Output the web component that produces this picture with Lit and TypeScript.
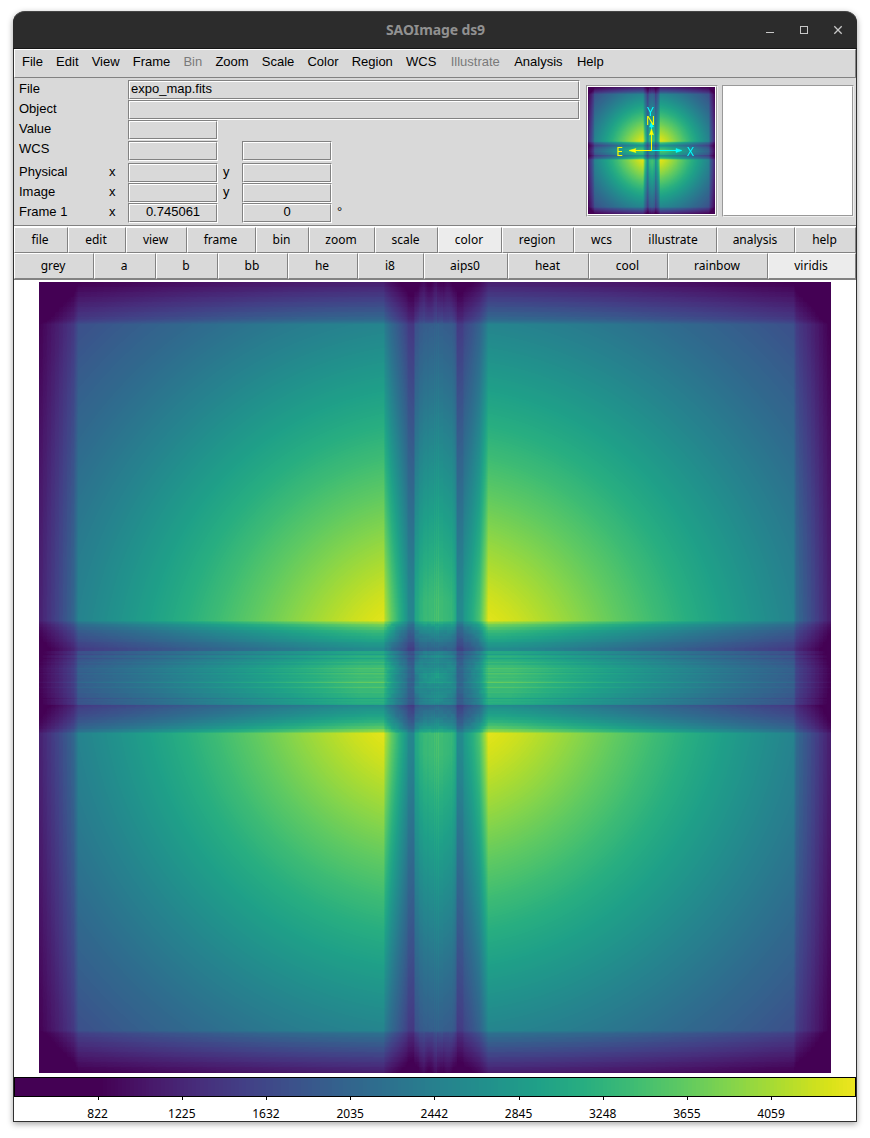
import { LitElement, html, css } from "lit";
import { customElement } from "lit/decorators.js";

type Stop = [number, number];

const VIRIDIS = [
  [68, 1, 84], [72, 24, 106], [71, 45, 123], [66, 64, 134], [59, 82, 139], [51, 99, 141],
  [44, 114, 142], [38, 130, 142], [33, 145, 140], [31, 160, 136], [40, 174, 128], [63, 188, 115],
  [94, 201, 98], [132, 212, 75], [173, 220, 48], [216, 226, 25], [253, 231, 37],
];

/** Colour for a position 0..1 along the colorbar. */
function colorAt(t: number): number[] {
  let v = ((t - 0.1) / 0.9) * 0.975;
  v = Math.max(0, Math.min(0.975, v));
  v = Math.floor(v * 200) / 200;
  const f = v * 16;
  const i = Math.min(15, Math.floor(f));
  const k = f - i;
  return [0, 1, 2].map((c) => VIRIDIS[i][c] * (1 - k) + VIRIDIS[i + 1][c] * k);
}

function interp(stops: Stop[], x: number): number {
  if (x <= stops[0][0]) return stops[0][1];
  for (let i = 1; i < stops.length; i++) {
    if (x < stops[i][0]) {
      const [x0, a] = stops[i - 1];
      const [x1, b] = stops[i];
      return a + ((b - a) * (x - x0)) / (x1 - x0);
    }
  }
  return stops[stops.length - 1][1];
}

function hash(n: number): number {
  const s = Math.sin(n * 127.1 + 11.7) * 43758.5453;
  return s - Math.floor(s);
}

/** Position snapped part of the way to a grid, which gives soft dither steps. */
function soften(v: number, step: number): number {
  return v * 0.5 + (Math.floor(v / step) * step + step / 2) * 0.5;
}

// Exposure (seconds) against off-axis distance, in field units of 792 x 791.
const VIGNETTING: Stop[] = [
  [0, 4480], [77, 4405], [100, 4270], [130, 4060], [160, 3850], [213, 3480],
  [280, 3010], [360, 2485], [430, 2090], [503, 1733], [580, 1450],
];

// Detector coverage across the field: dithered edges and the chip gaps.
const COVER_X: Stop[] = [
  [0, 0.51], [20, 0.69], [34, 0.83], [37, 0.93], [39, 1], [344, 1], [346, 0.93], [352, 0.83], [361, 0.71],
  [367, 0.63], [369, 0.58], [374, 0.565], [376, 0.68], [382, 0.74], [390, 0.765], [403, 0.765],
  [412, 0.75], [416, 0.7], [418, 0.58], [423, 0.59], [425, 0.64], [432, 0.7], [440, 0.79],
  [446, 0.92], [449, 1], [754, 1], [757, 0.86], [772, 0.71], [792, 0.48],
];
const COVER_Y: Stop[] = [
  [0, 0.5], [20, 0.68], [36, 0.83], [39, 0.9], [42, 1], [338, 1], [340, 0.92], [344, 0.83], [350, 0.75],
  [358, 0.68], [362, 0.63], [364, 0.62], [366, 0.59], [368, 0.59], [369, 0.69], [374, 0.72],
  [380, 0.75], [395, 0.775], [412, 0.75], [420, 0.71], [422, 0.69], [423, 0.58], [426, 0.62],
  [432, 0.66], [440, 0.74], [446, 0.82], [449, 0.9], [451, 1], [748, 1], [751, 0.88], [770, 0.7], [791, 0.49],
];

function coverX(x: number): number {
  let q = x;
  if (x < 34 || x > 758) q = soften(x, 4);
  let c = interp(COVER_X, q);
  if (x >= 376 && x < 416) {
    c += (hash(Math.floor(x / 2)) - 0.5) * 0.012;
    if (x === 395 || x === 397 || x === 399) c += 0.022;
  }
  return c;
}

function coverY(y: number): number {
  let q = y;
  if (y < 36 || y > 752) q = soften(y, 5);
  else if (y > 340 && y < 450 && (y < 363 || y > 426)) q = soften(y, 3);
  let c = interp(COVER_Y, q);
  if (y > 368 && y < 423) {
    c += (hash(Math.floor(y / 1.5) + 51) - 0.5) * 0.035;
    if (y === 386 || y === 391 || y === 400 || y === 405) c += 0.045;
    if (y === 376 || y === 416 || y === 372) c -= 0.05;
  }
  return c;
}

function exposure(x: number, y: number): number {
  const r = Math.hypot(x - 396.5, y - 395.5);
  let e = interp(VIGNETTING, r) * coverX(x) * coverY(y);
  const midX = x > 374 && x < 417;
  const midY = y > 368 && y < 423;
  if (midX && (y < 41 || y > 749)) {
    const edge = y < 41 ? 1 - y / 41 : (y - 749) / 42;
    e *= 0.98 + Math.cos((x - 396) * 0.52) * 0.07 * edge + (hash(Math.floor(x / 2) + 9) - 0.5) * 0.06;
  }
  if ((x < 38 || x > 755) && midY) e *= 0.95;
  if (x > 345 && x < 448 && y > 340 && y < 451) {
    e *= 1.01 + (hash(Math.floor(x / 4) * 31 + Math.floor(y / 4) * 57) - 0.5) * 0.035;
    if (midX && midY) e *= 1.01 + Math.cos((y - 395) * 0.29) * 0.045 * Math.cos((x - 396) * 0.1);
  }
  return e;
}

@customElement("exposure-map")
export class ExposureMap extends LitElement {
  static properties = { width: { type: Number }, height: { type: Number } };
  declare width: number;
  declare height: number;
  static styles = css`
    :host { display: block; }
    canvas { display: block; }
  `;
  firstUpdated() {
    const cv = this.renderRoot.querySelector("canvas") as HTMLCanvasElement;
    const ctx = cv.getContext("2d")!;
    const w = this.width;
    const h = this.height;
    const img = ctx.createImageData(w, h);
    const small = w < 400;
    const sub = small ? 3 : 1;
    for (let y = 0; y < h; y++) {
      for (let x = 0; x < w; x++) {
        let e = 0;
        for (let j = 0; j < sub; j++) {
          for (let i = 0; i < sub; i++) {
            const fx = Math.floor(((x + i / sub) * 792) / w);
            const fy = Math.floor(((y + j / sub) * 791) / h);
            e += exposure(fx, fy);
          }
        }
        e /= sub * sub;
        const c = colorAt((e - 418) / 4048);
        const o = (y * w + x) * 4;
        img.data[o] = c[0];
        img.data[o + 1] = c[1];
        img.data[o + 2] = c[2];
        img.data[o + 3] = 255;
      }
    }
    ctx.putImageData(img, 0, 0);
  }
  render() {
    return html`<canvas width=${this.width} height=${this.height}></canvas>`;
  }
}

@customElement("color-bar")
export class ColorBar extends LitElement {
  static styles = css`
    :host { display: block; font: 12px/16px "Noto Sans", sans-serif; color: #000; }
    canvas { display: block; border: 1px solid #000; }
    .scale { display: flex; padding-left: 42px; }
    .mark { width: 84.2px; display: flex; flex-direction: column; align-items: center; }
    .tick { width: 1px; height: 3px; background: #000; }
    .value { margin-top: 6px; margin-right: 1px; }
  `;
  firstUpdated() {
    const cv = this.renderRoot.querySelector("canvas") as HTMLCanvasElement;
    const ctx = cv.getContext("2d")!;
    for (let x = 0; x < 840; x++) {
      const [r, g, b] = colorAt((x + 0.5) / 840).map(Math.round);
      ctx.fillStyle = `rgb(${r},${g},${b})`;
      ctx.fillRect(x, 0, 1, 18);
    }
  }
  render() {
    const marks = [822, 1225, 1632, 2035, 2442, 2845, 3248, 3655, 4059];
    return html`
      <canvas width="840" height="18"></canvas>
      <div class="scale">
        ${marks.map((m) => html`<div class="mark"><span class="tick"></span><span class="value">${m}</span></div>`)}
      </div>
    `;
  }
}

@customElement("app-root")
export class AppRoot extends LitElement {
  static styles = css`
    :host { display: block; height: 1138px; background: #fff; overflow: hidden; }
    * { box-sizing: border-box; }
    .window {
      width: 844px; height: 1111px; margin: 11px 0 0 13px; display: flex; flex-direction: column;
      border: 1px solid #303030; border-top: 0; border-radius: 12px 12px 0 0; background: #fff;
      box-shadow: 0 2px 6px rgba(0, 0, 0, 0.36); font: 13px/16px "Liberation Sans", Arial, sans-serif; color: #000;
    }
    .title {
      height: 38px; flex: none; margin: 0 -1px; border-radius: 12px 12px 0 0; background: #2c2c2c;
      border-top: 1px solid #454545; border-bottom: 1px solid #161616; display: grid;
      grid-template-columns: 101px 1fr 100px; align-items: center;
    }
    .name { grid-column: 2; text-align: center; font: bold 14px/20px "Noto Sans", sans-serif; letter-spacing: -0.12px; color: #919191; }
    .controls svg { display: block; }
    .menu {
      height: 29px; flex: none; background: #d9d9d9; border: 1px solid; border-color: #fff #828282 #828282 #fff;
      display: flex; gap: 13.15px; padding: 4px 0 0 7px; white-space: nowrap;
    }
    .menu .off { color: #7a7a7a; }
    .menu .wider { margin-left: 1.2px; }
    .info { height: 148px; flex: none; background: #d9d9d9; border-bottom: 1px solid #828282; display: flex; }
    .fields { width: 567px; margin-left: 5px; padding-top: 2px; }
    .row { height: 20px; display: grid; grid-template-columns: 90px 19px 90px 24px 90px 1fr; }
    .row.wcs { height: 23px; padding-top: 1px; }
    .row > span { padding-top: 1px; line-height: 15px; }
    .row.wcs > span { padding-top: 0; }
    .row .mid { padding-top: 1px; }
    .row .y { padding-left: 5px; padding-top: 1px; }
    .row .deg { padding-left: 5px; padding-top: 1px; }
    .box {
      height: 20px; border: 1px solid; border-color: #828282 #fff #fff #828282; display: grid;
    }
    .inner {
      border: 1px solid; border-color: #fff #828282 #828282 #fff; text-align: center; line-height: 13px;
    }
    .wide { width: 452px; }
    .wide .inner { text-align: left; padding-left: 1px; }
    .view { width: 132px; height: 132px; margin-top: 7px; border: 1px solid; border-color: #999 #eee #eee #999; display: grid; position: relative; }
    .view + .view { margin-left: 4px; }
    .pane { border: 1px solid; border-color: #fff #999 #999 #fff; background: #fff; }
    .compass { position: absolute; left: 1px; top: 1px; font: 12px "Noto Sans", sans-serif; }
    .buttons { display: grid; flex: none; font: 12px/16px "Noto Sans", sans-serif; }
    .first { height: 27px; border-top: 1px solid #fff; grid-template-columns: 54px 58px 61px 69px 53px 66px 63px 64px 72px 57px 86px 78px 61px; }
    .second { height: 27px; border-bottom: 1px solid #828282; grid-template-columns: 80px 62px 62px 70px 70px 66px 84px 81px 79px 100px 88px; }
    .btn {
      background: #d9d9d9; border: 1px solid; border-color: #fff #828282 #828282 #fff;
      display: flex; justify-content: center; padding-top: 4px; padding-right: 2px;
    }
    .btn.on { background: #ececec; }
    .field { height: 797px; flex: none; padding: 2px 0 0 25px; }
  `;

  private box(value = "", wide = false) {
    return html`<div class="box ${wide ? "wide" : ""}"><div class="inner">${value}</div></div>`;
  }

  private buttons(kind: string, labels: string[], active: string) {
    return html`<div class="buttons ${kind}">
      ${labels.map((l) => html`<div class="btn ${l === active ? "on" : ""}">${l}</div>`)}
    </div>`;
  }

  render() {
    const menus = ["File", "Edit", "View", "Frame", "Bin", "Zoom", "Scale", "Color", "Region", "WCS", "Illustrate", "Analysis", "Help"];
    return html`
      <div class="window">
        <div class="title">
          <div class="name">SAOImage ds9</div>
          <div class="controls">
            <svg width="100" height="36" viewBox="757 12 100 36" fill="none" stroke="#c8c8c8">
              <path d="M766 32.5h8" />
              <rect x="800.5" y="26.5" width="7" height="7" />
              <path d="M834.3 26.3l7.4 7.4M841.7 26.3l-7.4 7.4" stroke-width="1.3" />
            </svg>
          </div>
        </div>
        <div class="menu">
          ${menus.map((m, i) => html`<span class="${m === "Bin" || m === "Illustrate" ? "off" : ""} ${i > 9 ? "wider" : ""}">${m}</span>`)}
        </div>
        <div class="info">
          <div class="fields">
            <div class="row"><span>File</span><span></span>${this.box("expo_map.fits", true)}</div>
            <div class="row"><span>Object</span><span></span>${this.box("", true)}</div>
            <div class="row"><span>Value</span><span></span>${this.box()}</div>
            <div class="row wcs"><span>WCS</span><span></span>${this.box()}<span></span>${this.box()}</div>
            <div class="row"><span>Physical</span><span class="mid">x</span>${this.box()}<span class="y">y</span>${this.box()}</div>
            <div class="row"><span>Image</span><span class="mid">x</span>${this.box()}<span class="y">y</span>${this.box()}</div>
            <div class="row"><span>Frame 1</span><span class="mid">x</span>${this.box("0.745061")}<span></span>${this.box("0")}<span class="deg">°</span></div>
          </div>
          <div class="view">
            <div class="pane"><exposure-map width="127" height="127"></exposure-map></div>
            <svg class="compass" width="128" height="128" viewBox="588 87 128 128">
              <g stroke="#0ff" fill="#0ff">
                <path d="M651.5 150.5V124M651.5 150.5H680" fill="none" />
                <path d="M651.5 122l2 5h-4zM682 150.5l-6-2v4z" stroke-width=".5" />
              </g>
              <g stroke="#ff0" fill="#ff0">
                <path d="M651.5 150.5V131M651.5 150.5H631" fill="none" />
                <path d="M651.5 129l2 6-2-1-2 1zM629 150.5l7-2-1 2 1 2z" stroke-width=".5" />
              </g>
              <g text-anchor="middle">
                <text x="650.5" y="116" fill="#0ff">Y</text>
                <text x="690.5" y="156" fill="#0ff">X</text>
                <text x="650.5" y="125" fill="#ff0">N</text>
                <text x="619.5" y="156" fill="#ff0">E</text>
              </g>
            </svg>
          </div>
          <div class="view"><div class="pane"></div></div>
        </div>
        ${this.buttons("first", ["file", "edit", "view", "frame", "bin", "zoom", "scale", "color", "region", "wcs", "illustrate", "analysis", "help"], "color")}
        ${this.buttons("second", ["grey", "a", "b", "bb", "he", "i8", "aips0", "heat", "cool", "rainbow", "viridis"], "viridis")}
        <div class="field"><exposure-map width="792" height="791"></exposure-map></div>
        <color-bar></color-bar>
      </div>
    `;
  }
}
